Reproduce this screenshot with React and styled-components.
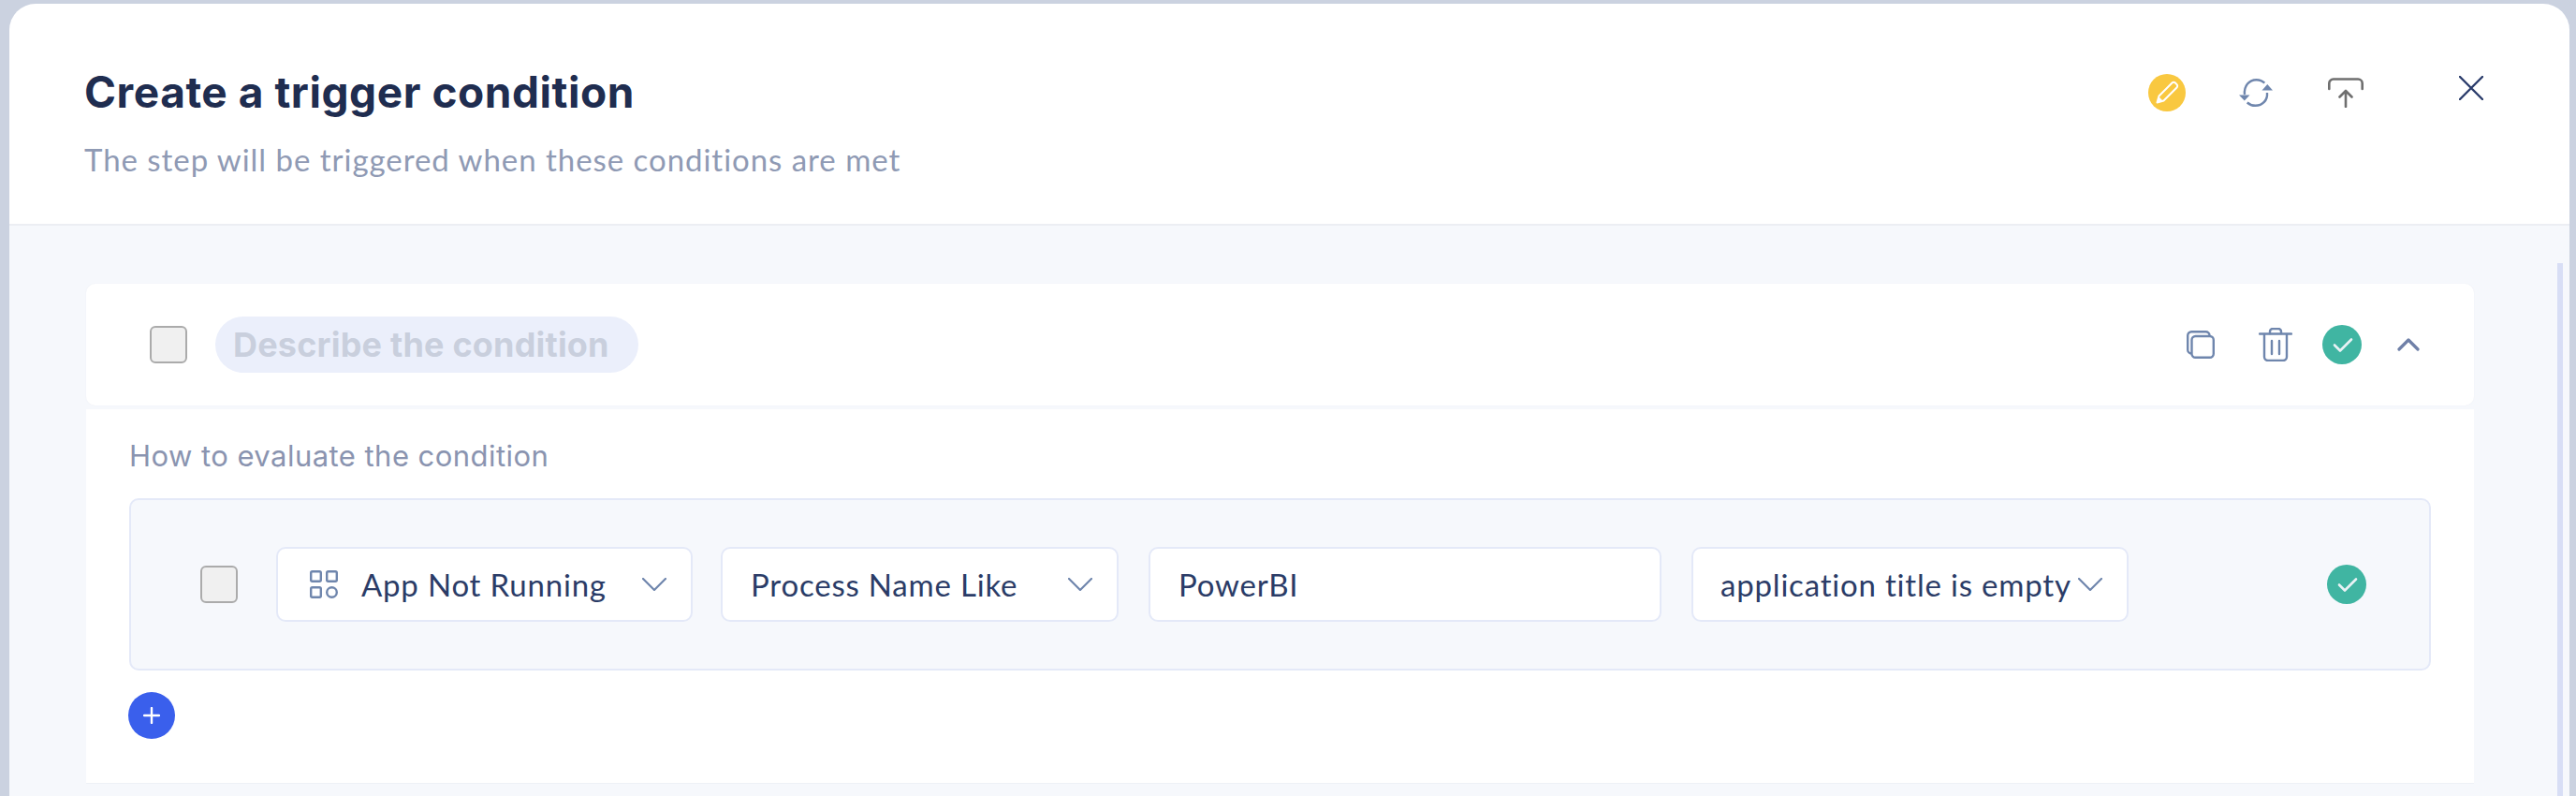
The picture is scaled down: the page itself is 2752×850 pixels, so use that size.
import React from "react";
import styled, { createGlobalStyle } from "styled-components";

const Global = createGlobalStyle`
  html, body { margin: 0; padding: 0; background: #cbd2e0; }
  body { font-family: "Lato", "Liberation Sans", sans-serif; overflow: hidden; }
`;

const Page = styled.div`
  width: 2752px; height: 850px; box-sizing: border-box;
  padding: 4px 7px 0 10px; display: flex; overflow: hidden;
`;
const Modal = styled.div`
  flex: 1; display: flex; flex-direction: column; background: #fff;
  border-radius: 28px 28px 0 0; overflow: hidden;
`;
const Header = styled.header`
  height: 235px; flex: none; box-sizing: content-box; display: flex;
  justify-content: space-between; align-items: flex-start;
  padding: 0 92px 0 80px; border-bottom: 2px solid #eceef3;
`;
const Heading = styled.div`
  display: flex; flex-direction: column; padding-top: 64px; gap: 22px;
`;
const Title = styled.h1`
  margin: 0; font: 700 46px/60px "Inter", sans-serif; color: #1f2d50; letter-spacing: 0.55px;
`;
const Subtitle = styled.p`
  margin: 0; font: 400 33px/40px "Lato", sans-serif; color: #8f9ab4; letter-spacing: 0.96px;
`;
const Actions = styled.div`
  display: flex; align-items: center; height: 40px; margin-top: 75px;
`;
const Icon = styled.svg`
  flex: none; display: block;
  margin-left: ${(p) => p.$ml || 0}px;
  margin-right: ${(p) => p.$mr || 0}px;
  margin-bottom: ${(p) => p.$mb || 0}px;
`;
const Body = styled.main`
  position: relative; flex: 1; background: #f6f8fc; padding: 62px 102px 0 82px;
`;
const ScrollThumb = styled.div`
  position: absolute; top: 40px; bottom: 0; right: 7px; width: 6px; background: #d8def5;
`;
const CardHead = styled.section`
  height: 130px; display: flex; align-items: center; background: #fff;
  border-radius: 10px; padding: 0 58px 0 68px; gap: 30px; box-shadow: 0 0 2px #eef0f5;
`;
const Checkbox = styled.span`
  flex: none; width: 40px; height: 40px; box-sizing: border-box; display: block;
  background: #f0f0f0; border: 2px solid #ababab; border-radius: 6px;
`;
const NamePill = styled.div`
  height: 60px; width: 452px; box-sizing: border-box; padding-left: 19px; display: flex; align-items: center;
  border-radius: 30px; background: #ebeffb; color: #c9cfdd;
  font: 700 36px/60px "Inter", sans-serif; letter-spacing: 0.2px; white-space: nowrap;
`;
const CardIcons = styled.div`
  margin-left: auto; display: flex; align-items: center;
`;
const CardBody = styled.section`
  margin-top: 4px; height: 400px; box-sizing: border-box; background: #fff; padding: 28px 46px 0;
  border-bottom: 1px solid #eef1f6;
`;
const Label = styled.div`
  font: 400 31px/44px "Inter", sans-serif; color: #8a94b0; letter-spacing: 0.45px; margin-bottom: 23px;
`;
const Rule = styled.div`
  height: 184px; box-sizing: border-box; display: flex; align-items: center;
  background: #f6f8fc; border: 2px solid #e4e9f8; border-radius: 10px;
  padding: 0 67px 0 74px;
`;
const Field = styled.div`
  flex: none; height: 80px; box-sizing: border-box; display: flex; align-items: center;
  width: ${(p) => p.$w}px; margin-left: ${(p) => p.$ml}px;
  padding: 0 26px 0 ${(p) => p.$pl}px; background: #fff;
  border: 2px solid #e4e9f8; border-radius: 10px;
  font: 400 33px/40px "Lato", sans-serif; color: #2b3c67; letter-spacing: 0.8px; white-space: nowrap;
`;
const Chevron = styled(Icon)`
  margin-left: auto;
`;
const AddButton = styled.button`
  display: flex; align-items: center; justify-content: center; width: 50px; height: 50px; padding: 0;
  margin-top: 23px; margin-left: -1px; border: 0; border-radius: 50%; background: #3a5fec;
`;

const Pencil = () => (
  <Icon width="40" height="40" viewBox="0 0 40 40">
    <circle cx="20" cy="20" r="20" fill="#f9c840" />
    <path d="M9.5 30.5l2-7L25.5 9.5a2.4 2.4 0 0 1 3.4 0l1.6 1.6a2.4 2.4 0 0 1 0 3.4L16.5 28.5z" fill="none" stroke="#fff" strokeWidth="2" strokeLinejoin="round" />
    <path d="M9.5 30.5l2-6 4.5 4.500z" fill="#fff" />
  </Icon>
);
const Sync = () => (
  <Icon $ml={57} width="36" height="30" viewBox="0 0 36 30">
    <g fill="none" stroke="#6f86ad" strokeWidth="2.4">
      <path d="M6 17C5 7.5 11 1.2 18.5 1.2c3.500 0 6.500 1.200 8.800 3.500" />
      <path d="M30 15c0.800 8-5 13.800-12.500 13.800-3.500 0-6.500-1.200-8.800-3.300" />
    </g>
    <path d="M0 17.500h11.500l-5.700 6z" fill="#6f86ad" />
    <path d="M24.500 12.500h11.500l-5.700-6.500z" fill="#6f86ad" />
  </Icon>
);
const Export = () => (
  <Icon $ml={59} width="38" height="32" viewBox="0 0 38 32">
    <g fill="none" stroke="#6f6f6f" strokeWidth="2.6" strokeLinecap="round" strokeLinejoin="round">
      <path d="M1.300 12V6a4.500 4.500 0 0 1 4.500-4.500h26.400a4.500 4.500 0 0 1 4.500 4.500v6" />
      <path d="M19 31V14M12.500 20.500L19 14l6.500 6.500" />
    </g>
  </Icon>
);
const Close = () => (
  <Icon $ml={102} $mb={10} width="26" height="26" viewBox="0 0 26 26">
    <path d="M1 1l24 24M25 1L1 25" stroke="#2a3c6b" strokeWidth="2.4" strokeLinecap="round" />
  </Icon>
);
const Copy = () => (
  <Icon width="30" height="30" viewBox="0 0 30 30" fill="none" stroke="#6f86ad" strokeWidth="2.4">
    <path d="M5 24.500a4 4 0 0 1-3.800-4V5.200a4 4 0 0 1 4-4h15.300a4 4 0 0 1 4 3.800" />
    <rect x="5.500" y="6" width="23.300" height="22.800" rx="4" />
  </Icon>
);
const Trash = () => (
  <Icon $ml={47} width="36" height="36" viewBox="0 0 36 36" fill="none" stroke="#6f86ad" strokeWidth="2.400" strokeLinecap="round">
    <path d="M1 6.500h34" />
    <path d="M12 6V4a3 3 0 0 1 3-3h6a3 3 0 0 1 3 3v2" />
    <path d="M6 7v24a4 4 0 0 0 4 4h16a4 4 0 0 0 4-4V7" />
    <path d="M14 14v14M22 14v14" />
  </Icon>
);
const Check = ({ ml }) => (
  <Icon $ml={ml} width="42" height="42" viewBox="0 0 42 42">
    <circle cx="21" cy="21" r="21" fill="#40b5a2" />
    <path d="M13 21.500l6 6L31 15.500" fill="none" stroke="#e9f2f5" strokeWidth="2.600" strokeLinecap="round" strokeLinejoin="round" />
  </Icon>
);
const ChevronUp = () => (
  <Icon $ml={38} width="24" height="14" viewBox="0 0 24 14">
    <path d="M2 12L12 2l10 10" fill="none" stroke="#6f80a8" strokeWidth="3.200" strokeLinecap="round" strokeLinejoin="round" />
  </Icon>
);
const ChevronDown = () => (
  <Chevron width="26" height="14" viewBox="0 0 26 14">
    <path d="M1 1l12 12L25 1" fill="none" stroke="#6f86ad" strokeWidth="2.200" strokeLinecap="round" strokeLinejoin="round" />
  </Chevron>
);
const Apps = () => (
  <Icon $mr={25} width="30" height="30" viewBox="0 0 30 30" fill="none" stroke="#6f86ad" strokeWidth="2.400">
    <rect x="1.200" y="1.200" width="10.600" height="10.600" rx="1.500" />
    <rect x="18.200" y="1.200" width="10.600" height="10.600" rx="1.500" />
    <rect x="1.200" y="18.200" width="10.600" height="10.600" rx="1.500" />
    <circle cx="23.500" cy="23.500" r="5.300" />
  </Icon>
);

export default function App() {
  return (
    <Page>
      <Global />
      <Modal>
        <Header>
          <Heading>
            <Title>Create a trigger condition</Title>
            <Subtitle>The step will be triggered when these conditions are met</Subtitle>
          </Heading>
          <Actions>
            <Pencil />
            <Sync />
            <Export />
            <Close />
          </Actions>
        </Header>
        <Body>
          <ScrollThumb />
          <CardHead>
            <Checkbox />
            <NamePill>Describe the condition</NamePill>
            <CardIcons>
              <Copy />
              <Trash />
              <Check ml={32} />
              <ChevronUp />
            </CardIcons>
          </CardHead>
          <CardBody>
            <Label>How to evaluate the condition</Label>
            <Rule>
              <Checkbox />
              <Field $w={445} $ml={41} $pl={34}><Apps />App Not Running<ChevronDown /></Field>
              <Field $w={425} $ml={30} $pl={30}>Process Name Like<ChevronDown /></Field>
              <Field $w={548} $ml={32} $pl={30}>PowerBI</Field>
              <Field $w={467} $ml={32} $pl={29}>application title is empty<ChevronDown /></Field>
              <Check ml={212} />
            </Rule>
            <AddButton aria-label="Add">
              <Icon width="18" height="18" viewBox="0 0 18 18">
                <path d="M9 1v16M1 9h16" stroke="#fff" strokeWidth="2.400" strokeLinecap="round" />
              </Icon>
            </AddButton>
          </CardBody>
        </Body>
      </Modal>
    </Page>
  );
}
